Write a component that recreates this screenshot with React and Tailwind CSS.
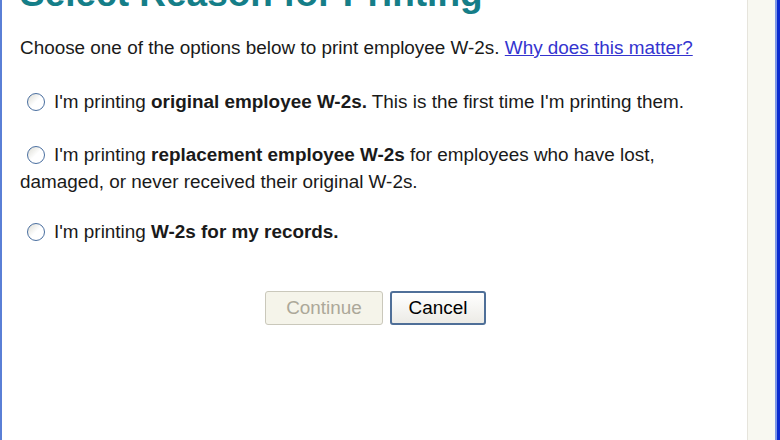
import React, { useState } from 'react';

const options = [
  { id: 'original', pre: "I'm printing ", bold: 'original employee W-2s.', post: " This is the first time I'm printing them." },
  { id: 'replacement', pre: "I'm printing ", bold: 'replacement employee W-2s', post: ' for employees who have lost, damaged, or never received their original W-2s.' },
  { id: 'records', pre: "I'm printing ", bold: 'W-2s for my records.', post: '' },
];

const Radio = ({ checked }) => (
  <span className="mt-[5px] ml-[7px] mr-[9px] inline-flex h-[18px] w-[18px] shrink-0 items-center justify-center rounded-full border border-[#4a6fa0] bg-gradient-to-br from-[#dcdcd4] via-white to-white">
    {checked && <span className="h-[8px] w-[8px] rounded-full bg-[#21a121]" />}
  </span>
);

export default function App() {
  const [reason, setReason] = useState(null);

  return (
    <div className="flex h-[440px] w-[780px] overflow-hidden bg-white" style={{ fontFamily: '"Liberation Sans", Arial, sans-serif' }}>
      <div className="w-[2px] bg-[#5a7fd6]" />
      <div className="flex-1 overflow-hidden pl-[18px] pr-4">
        <h1 className="-mt-[26px] text-[37px] font-bold leading-[40px] text-[#157e88]">Select Reason for Printing</h1>

        <p className="mt-[23px] text-[18.9px] leading-[22px] text-[#1a1a1a]">
          Choose one of the options below to print employee W-2s.{' '}
          <a href="#" className="text-[#3434cf] underline">Why does this matter?</a>
        </p>

        <div className="mt-[29px] flex flex-col">
          {options.map((o, i) => (
            <label
              key={o.id}
              onClick={() => setReason(o.id)}
              className={`block cursor-pointer text-[18.9px] leading-[27px] text-[#1a1a1a] ${i === 0 ? '' : i === 1 ? 'mt-[26px]' : 'mt-[23px]'}`}
            >
              <span className="float-left flex">
                <Radio checked={reason === o.id} />
              </span>
              {o.pre}
              <span className="font-bold">{o.bold}</span>
              {o.post}
            </label>
          ))}
        </div>

        <div className="mt-[46px] flex justify-center gap-[7px]">
          <button
            disabled={!reason}
            className={`h-[34px] w-[118px] rounded-[3px] border text-[18.9px] ${reason ? 'border-[#003c74] bg-[#f4f4f0] text-black' : 'border-[#cac8bb] bg-[#f5f4ea] text-[#aca899]'}`}
          >
            Continue
          </button>
          <button className="h-[34px] w-[96px] rounded-[3px] border-2 border-[#4f6f98] bg-gradient-to-b from-white to-[#ecebe6] text-[18.9px] text-black">
            Cancel
          </button>
        </div>
      </div>
      <div className="w-[28px] border-l border-[#e6e4dc] bg-[#f8f8f1]" />
      <div className="w-[2px] bg-[#7d98e8]" />
      <div className="w-[3px] bg-[#0a2bd0]" />
    </div>
  );
}
